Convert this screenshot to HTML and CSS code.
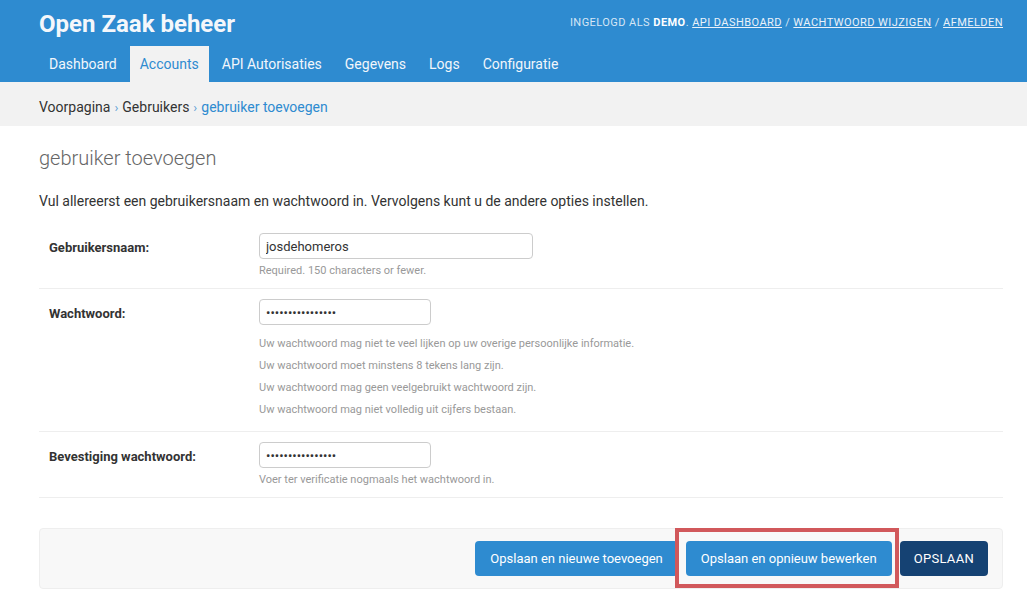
FILE: index.html
```html
<!DOCTYPE html>
<html lang="nl">
<head>
<meta charset="utf-8">
<title>gebruiker toevoegen | Open Zaak beheer</title>
<link rel="stylesheet" href="styles.css">
</head>
<body>
<header class="header">
  <div class="branding">
    <h1 class="site-name">Open Zaak beheer</h1>
    <div class="user-tools">
      Ingelogd als <strong>demo</strong>.
      <a href="#">API dashboard</a> /
      <a href="#">Wachtwoord wijzigen</a> /
      <a href="#">Afmelden</a>
    </div>
  </div>
  <nav class="nav">
    <a class="nav-item" href="#">Dashboard</a>
    <a class="nav-item active" href="#">Accounts</a>
    <a class="nav-item" href="#">API Autorisaties</a>
    <a class="nav-item" href="#">Gegevens</a>
    <a class="nav-item" href="#">Logs</a>
    <a class="nav-item" href="#">Configuratie</a>
  </nav>
</header>

<div class="breadcrumbs">
  <a href="#" class="crumb">Voorpagina</a><span class="sep">›</span><a href="#" class="crumb">Gebruikers</a><span class="sep">›</span><span class="current">gebruiker toevoegen</span>
</div>

<main class="content">
  <h2 class="page-title">gebruiker toevoegen</h2>
  <p class="intro">Vul allereerst een gebruikersnaam en wachtwoord in. Vervolgens kunt u de andere opties instellen.</p>

  <form class="form">
    <div class="form-row">
      <label class="label">Gebruikersnaam:</label>
      <div class="field">
        <input class="input input-wide" type="text" value="josdehomeros">
        <div class="help">Required. 150 characters or fewer.</div>
      </div>
    </div>
    <div class="form-row">
      <label class="label">Wachtwoord:</label>
      <div class="field">
        <input class="input input-short" type="password" value="josdehomeros1234">
        <ul class="help-list">
          <li>Uw wachtwoord mag niet te veel lijken op uw overige persoonlijke informatie.</li>
          <li>Uw wachtwoord moet minstens 8 tekens lang zijn.</li>
          <li>Uw wachtwoord mag geen veelgebruikt wachtwoord zijn.</li>
          <li>Uw wachtwoord mag niet volledig uit cijfers bestaan.</li>
        </ul>
      </div>
    </div>
    <div class="form-row">
      <label class="label">Bevestiging wachtwoord:</label>
      <div class="field">
        <input class="input input-short" type="password" value="josdehomeros1234">
        <div class="help">Voer ter verificatie nogmaals het wachtwoord in.</div>
      </div>
    </div>

    <div class="submit-row">
      <button type="button" class="btn btn-add">Opslaan en nieuwe toevoegen</button>
      <button type="button" class="btn btn-continue">Opslaan en opnieuw bewerken</button>
      <button type="button" class="btn btn-default">OPSLAAN</button>
    </div>
  </form>
</main>
</body>
</html>
```

FILE: styles.css
```css
* {
  box-sizing: border-box;
}

html, body {
  margin: 0;
  padding: 0;
  background: #ffffff;
  font-family: Roboto, "Liberation Sans", Arial, sans-serif;
  color: #333333;
}

a {
  text-decoration: none;
  color: inherit;
}

/* Header */
.header {
  background: #2e8bd0;
  padding: 0 24px 0 39px;
  color: #ffffff;
}

.branding {
  display: flex;
  justify-content: space-between;
  align-items: center;
  height: 46px;
}

.site-name {
  margin: 0;
  font-size: 24px;
  font-weight: 700;
  line-height: 28px;
  color: #f4f7fb;
  padding-top: 1px;
}

.user-tools {
  font-size: 11px;
  letter-spacing: 0.45px;
  text-transform: uppercase;
  color: #d6e6f5;
  padding-bottom: 2px;
}

.user-tools strong {
  color: #ffffff;
  font-weight: 700;
}

.user-tools a {
  color: #eaf2fa;
  text-decoration: underline;
}

.nav {
  display: flex;
  gap: 3px;
  height: 36px;
}

.nav-item {
  display: block;
  padding: 0 10px;
  line-height: 36px;
  font-size: 14px;
  color: #f2f6fb;
}

.nav-item.active {
  background: #f2f2f2;
  color: #2e8bd0;
}

/* Breadcrumbs */
.breadcrumbs {
  display: flex;
  align-items: center;
  height: 44px;
  background: #f2f2f2;
  padding: 6px 24px 0 39px;
  font-size: 14px;
}

.crumb {
  color: #333333;
}

.sep {
  color: #5d9fd5;
  margin: 0 4px;
  font-size: 13px;
}

.current {
  color: #2e8bd0;
}

/* Content */
.content {
  padding: 0 24px 0 39px;
}

.page-title {
  margin: 20px 0 0;
  font-size: 20px;
  line-height: 24px;
  font-weight: 300;
  color: #666666;
}

.intro {
  margin: 21px 0 12px;
  font-size: 14px;
  line-height: 20px;
  color: #333333;
}

.form-row {
  display: flex;
  padding: 10px 10px 10px;
  border-bottom: 1px solid #eeeeee;
}

.label {
  width: 210px;
  flex: none;
  font-size: 13px;
  font-weight: 700;
  color: #333333;
  padding-top: 7px;
  line-height: 16px;
}

.field {
  display: flex;
  flex-direction: column;
  align-items: flex-start;
}

.input {
  height: 26px;
  border: 1px solid #cccccc;
  border-radius: 4px;
  padding: 0 6px;
  font-family: Roboto, "Liberation Sans", Arial, sans-serif;
  font-size: 13px;
  color: #333333;
  background: #ffffff;
  outline: none;
}

.input-wide {
  width: 274px;
}

.input-short {
  width: 172px;
  font-size: 13px;
}

.help {
  margin-top: 5px;
  font-size: 11px;
  line-height: 14px;
  color: #999999;
}

.help-list {
  list-style: none;
  margin: 8px 0 0;
  padding: 0;
}

.help-list li {
  font-size: 11px;
  line-height: 22px;
  color: #999999;
}

/* Submit row */
.submit-row {
  display: flex;
  justify-content: flex-end;
  align-items: center;
  margin-top: 30px;
  padding: 12px 14px 12px;
  background: #f8f8f8;
  border: 1px solid #eeeeee;
  border-radius: 4px;
}

.btn {
  height: 35px;
  border: none;
  border-radius: 4px;
  padding: 0 15px;
  font-family: Roboto, "Liberation Sans", Arial, sans-serif;
  font-size: 13px;
  color: #ffffff;
  background: #2e8bd0;
  cursor: pointer;
}

.btn-add {
  margin-right: 8px;
}

.btn-continue {
  position: relative;
  margin-right: 8px;
}

.btn-continue::after {
  content: "";
  position: absolute;
  top: -13px;
  bottom: -12px;
  left: -11px;
  right: -7px;
  border: 4px solid #d1585b;
  pointer-events: none;
}

.btn-default {
  background: #154273;
  padding: 0 14px;
  letter-spacing: 0.3px;
}
```
